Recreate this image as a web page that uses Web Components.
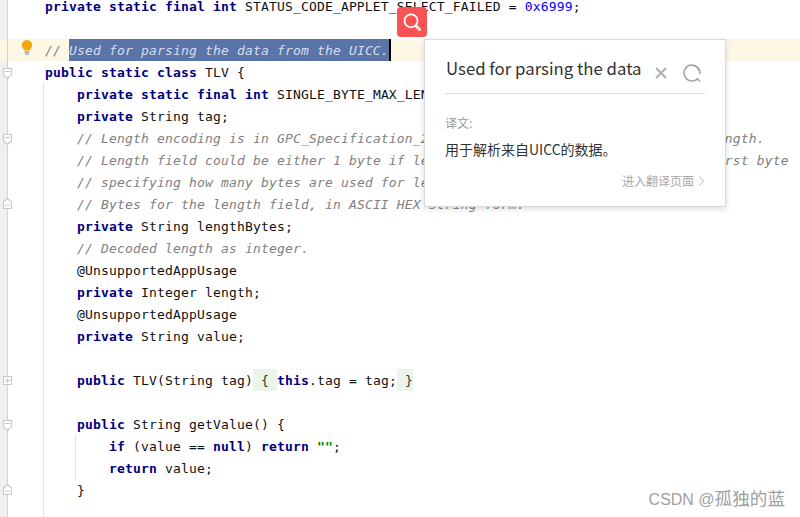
<!DOCTYPE html>
<html>
<head>
<meta charset="utf-8">
<style>
  html,body{margin:0;padding:0;background:#fff;overflow:hidden;height:517px;}
  .rows{margin-top:-5px;}
</style>
</head>
<body>

<template id="code-line-tpl">
<style>
  :host{
    display:flex;
    height:22px;
    position:relative;
    font-family:"DejaVu Sans Mono","Liberation Mono",monospace;
    font-size:13px;
    letter-spacing:.17px;
    line-height:24px;
    white-space:pre;
    color:#111;
  }
  :host([current]){background:#fdf8e6;}
  .gutter{
    flex:none;
    width:7px;
    background:#f0f0f0;
    border-right:1px solid #d2d2d2;
  }
  :host([current]) .gutter{background:transparent;}
  .lane{
    flex:none;
    width:37px;
    position:relative;
  }
  :host([guide]) .lane::after{
    content:"";
    position:absolute;
    right:1px;
    top:0;
    bottom:0;
    border-right:1px solid #e2e2e2;
  }
  .code{
    flex:1;
    position:relative;
  }
  :host([inner]) .code::before{
    content:"";
    position:absolute;
    left:30px;
    top:0;
    bottom:0;
    border-left:1px solid #e2e2e2;
  }
  .fold{
    position:absolute;
    left:3px;
    display:block;
  }
  ::slotted(b){color:#000080;font-weight:bold;}
  ::slotted(i){color:#808080;font-style:italic;}
  ::slotted(u){color:#0000ff;text-decoration:none;}
  ::slotted(s){color:#008000;font-weight:bold;text-decoration:none;}
  ::slotted(mark){
    display:inline-block;
    height:22px;
    background:#5a74a9;
    color:#d7deec;
    font-style:italic;
  }
  ::slotted(em){
    display:inline-block;
    height:22px;
    background:#e9f5e9;
    font-style:normal;
    color:#333;
  }
  ::slotted(a){
    display:inline-block;
    width:2px;
    height:22px;
    vertical-align:top;
    background:#000;
  }
</style>
<div class="gutter"></div>
<div class="lane"></div>
<div class="code"><slot></slot></div>
</template>

<template id="translate-popup-tpl">
<style>
  :host{
    position:absolute;
    left:424px;
    top:39px;
    width:260px;
    height:166px;
    padding:0 20px 0 20px;
    background:#fff;
    border:1px solid #d9d9d9;
    box-shadow:0 2px 6px rgba(0,0,0,.14);
    font-family:"Noto Sans CJK SC","Noto Sans",sans-serif;
    display:flex;
    flex-direction:column;
  }
  .head{
    height:54px;
    box-sizing:border-box;
    border-bottom:1px solid #dfdfdf;
    display:flex;
    align-items:center;
    color:#333;
    font-size:16.8px;
    white-space:nowrap;
  }
  .word{flex:1;padding-top:2px;padding-left:1px;}
  .tools{display:flex;align-items:center;gap:14px;padding-right:3px;padding-top:12px;}
  .tools svg{display:block;}
  .label{margin-top:21px;font-size:12px;line-height:16px;color:#9b9b9b;}
  .text{margin-top:8px;font-size:14px;line-height:20px;color:#333;}
  .more{
    margin-top:13px;
    padding-right:1px;
    font-size:12px;
    line-height:18px;
    color:#a8a8a8;
    display:flex;
    justify-content:flex-end;
    align-items:center;
    gap:5px;
  }
</style>
<div class="head">
  <div class="word"><slot name="word"></slot></div>
  <div class="tools">
    <svg width="14" height="14" viewBox="0 0 14 14"><path d="M2 2 L12 12 M12 2 L2 12" stroke="#a9adb5" stroke-width="2" fill="none"/></svg>
    <svg width="20" height="20" viewBox="0 0 20 20">
      <path d="M15.7 15.6 A8 8 0 1 1 17.9 11.2" stroke="#9fa4ae" stroke-width="1.5" fill="none"/>
      <path d="M10 2.6 A7.4 7.4 0 0 1 17 8" stroke="#9fa4ae" stroke-width="1.3" fill="none"/>
      <path d="M15 15 L18 18.5" stroke="#9fa4ae" stroke-width="1.5" fill="none"/>
    </svg>
  </div>
</div>
<div class="label"><slot name="label"></slot></div>
<div class="text"><slot name="text"></slot></div>
<div class="more">
  <slot name="more"></slot>
  <svg width="5" height="10" viewBox="0 0 5 10"><path d="M.5 .5 L4.5 5 L.5 9.5" stroke="#b5b5b5" fill="none"/></svg>
</div>
</template>

<template id="search-button-tpl">
<style>
  :host{
    position:absolute;
    left:397px;
    top:7px;
    width:30px;
    height:30px;
    border-radius:4px;
    background:#f65454;
    display:flex;
    align-items:center;
    justify-content:center;
  }
  svg{display:block;}
</style>
<svg width="22" height="22" viewBox="0 0 22 22">
  <circle cx="10" cy="9.8" r="6.5" stroke="#fff" stroke-width="1.7" fill="none"/>
  <path d="M14.8 14.8 L18.6 18.6" stroke="#fff" stroke-width="2.8" stroke-linecap="round"/>
  <path d="M15.4 15.4 L18.4 18.4" stroke="#f9a0a0" stroke-width=".7"/>
</svg>
</template>

<template id="water-mark-tpl">
<style>
  :host{
    position:absolute;
    right:15px;
    top:487px;
    font-family:"Liberation Sans","Noto Sans CJK SC",sans-serif;
    font-size:16px;
    line-height:24px;
    color:#a0a0a0;
    white-space:nowrap;
  }
  ::slotted(span){font-size:17.6px;}
</style>
<slot></slot>
</template>

<template id="bulb-icon-tpl">
<style>
  :host{position:absolute;left:21px;top:40px;display:block;width:12px;height:15px;}
  svg{display:block;}
</style>
<svg width="12" height="15" viewBox="0 0 12 15">
  <path d="M6 0 A5.2 5.2 0 0 1 11.2 5.2 C11.2 7.6 9.4 8.6 8.7 10.4 H3.3 C2.6 8.6 .8 7.6 .8 5.2 A5.2 5.2 0 0 1 6 0Z" fill="#f4a60b"/>
  <path d="M3.5 12 H8.5 M4 14 H8" stroke="#7a7a7a" stroke-width="1"/>
</svg>
</template>

<script>
  // every element clones its template into an open shadow root
  function stamp(el, id){
    var root = el.attachShadow({ mode: 'open' });
    root.appendChild(document.getElementById(id).content.cloneNode(true));
    return root;
  }

  // little shapes in the fold gutter, with the top offset inside the row
  var foldIcons = {
    down: { top: 7, d: 'M.5 .5 H8.5 V7 L4.5 10.5 L.5 7Z M2 3.5 H7' },
    up: { top: 5, d: 'M.5 10.5 H8.5 V4 L4.5 .5 L.5 4Z M2 7 H7' },
    plus: { top: 7, d: 'M.5 .5 H8.5 V8.5 H.5Z M2 4.5 H7 M4.5 2 V7' }
  };

  class CodeLine extends HTMLElement {
    constructor() {
      super();
      stamp(this, 'code-line-tpl');
    }
    connectedCallback() {
      var fold = foldIcons[this.getAttribute('fold')];
      if (fold && !this.shadowRoot.querySelector('.fold')) {
        var holder = document.createElement('div');
        holder.innerHTML = '<svg class="fold" style="top:' + fold.top + 'px" width="9" height="11" viewBox="0 0 9 11"><path d="' + fold.d + '" fill="#fff" stroke="#c8c8c8" stroke-width="1.2"/></svg>';
        this.shadowRoot.appendChild(holder.firstChild);
      }
    }
  }
  class TranslatePopup extends HTMLElement {
    constructor() { super(); stamp(this, 'translate-popup-tpl'); }
  }
  class SearchButton extends HTMLElement {
    constructor() { super(); stamp(this, 'search-button-tpl'); }
  }
  class WaterMark extends HTMLElement {
    constructor() { super(); stamp(this, 'water-mark-tpl'); }
  }
  class BulbIcon extends HTMLElement {
    constructor() { super(); stamp(this, 'bulb-icon-tpl'); }
  }

  customElements.define('code-line', CodeLine);
  customElements.define('translate-popup', TranslatePopup);
  customElements.define('search-button', SearchButton);
  customElements.define('water-mark', WaterMark);
  customElements.define('bulb-icon', BulbIcon);

  // the code, one row per editor line: [text markup, attributes]
  var K = function (s) { return '<b>' + s + '</b>'; };
  var C = function (s) { return '<i>' + s + '</i>'; };
  var pad = '    ', pad2 = '        ';
  var rows = [
    [K('private static final int') + ' STATUS_CODE_APPLET_SELECT_FAILED = <u>0x6999</u>;', ''],
    ['', ''],
    [C('// ') + '<mark>Used for parsing the data from the UICC.</mark><a></a>', 'current'],
    [K('public static class') + ' TLV {', 'fold="down"'],
    [pad + K('private static final int') + ' SINGLE_BYTE_MAX_LENGTH = <u>0x80</u>;', 'guide'],
    [pad + K('private') + ' String tag;', 'guide'],
    [pad + C('// Length encoding is in GPC_Specification_2.3.1.pdf, Section 11: BER-TLV with length.'), 'guide fold="down"'],
    [pad + C('// Length field could be either 1 byte if length &lt; 128, or multi-byte with the first byte'), 'guide'],
    [pad + C('// specifying how many bytes are used for length.'), 'guide'],
    [pad + C('// Bytes for the length field, in ASCII HEX string form.'), 'guide fold="up"'],
    [pad + K('private') + ' String lengthBytes;', 'guide'],
    [pad + C('// Decoded length as integer.'), 'guide'],
    [pad + '@UnsupportedAppUsage', 'guide'],
    [pad + K('private') + ' Integer length;', 'guide'],
    [pad + '@UnsupportedAppUsage', 'guide'],
    [pad + K('private') + ' String value;', 'guide'],
    ['', 'guide'],
    [pad + K('public') + ' TLV(String tag)<em> { </em>' + K('this') + '.tag = tag;<em> }</em>', 'guide fold="plus"'],
    ['', 'guide'],
    [pad + K('public') + ' String getValue() {', 'guide fold="down"'],
    [pad2 + K('if') + ' (value == ' + K('null') + ') ' + K('return') + ' <s>""</s>;', 'guide inner'],
    [pad2 + K('return') + ' value;', 'guide inner'],
    [pad + '}', 'guide fold="up"'],
    ['', 'guide style="height:16px"']
  ];

  var html = '<div class="rows">';
  rows.forEach(function (r) {
    html += '<code-line ' + r[1] + '>' + r[0] + '</code-line>';
  });
  html += '</div>';
  html += '<bulb-icon></bulb-icon><search-button></search-button>';
  html += '<translate-popup>' +
    '<span slot="word">Used for parsing the data</span>' +
    '<span slot="label">译文:</span>' +
    '<span slot="text">用于解析来自UICC的数据。</span>' +
    '<span slot="more">进入翻译页面</span>' +
    '</translate-popup>';
  html += '<water-mark>CSDN @<span>孤独的蓝</span></water-mark>';

  document.body.insertAdjacentHTML('beforeend', html);
</script>
</body>
</html>
